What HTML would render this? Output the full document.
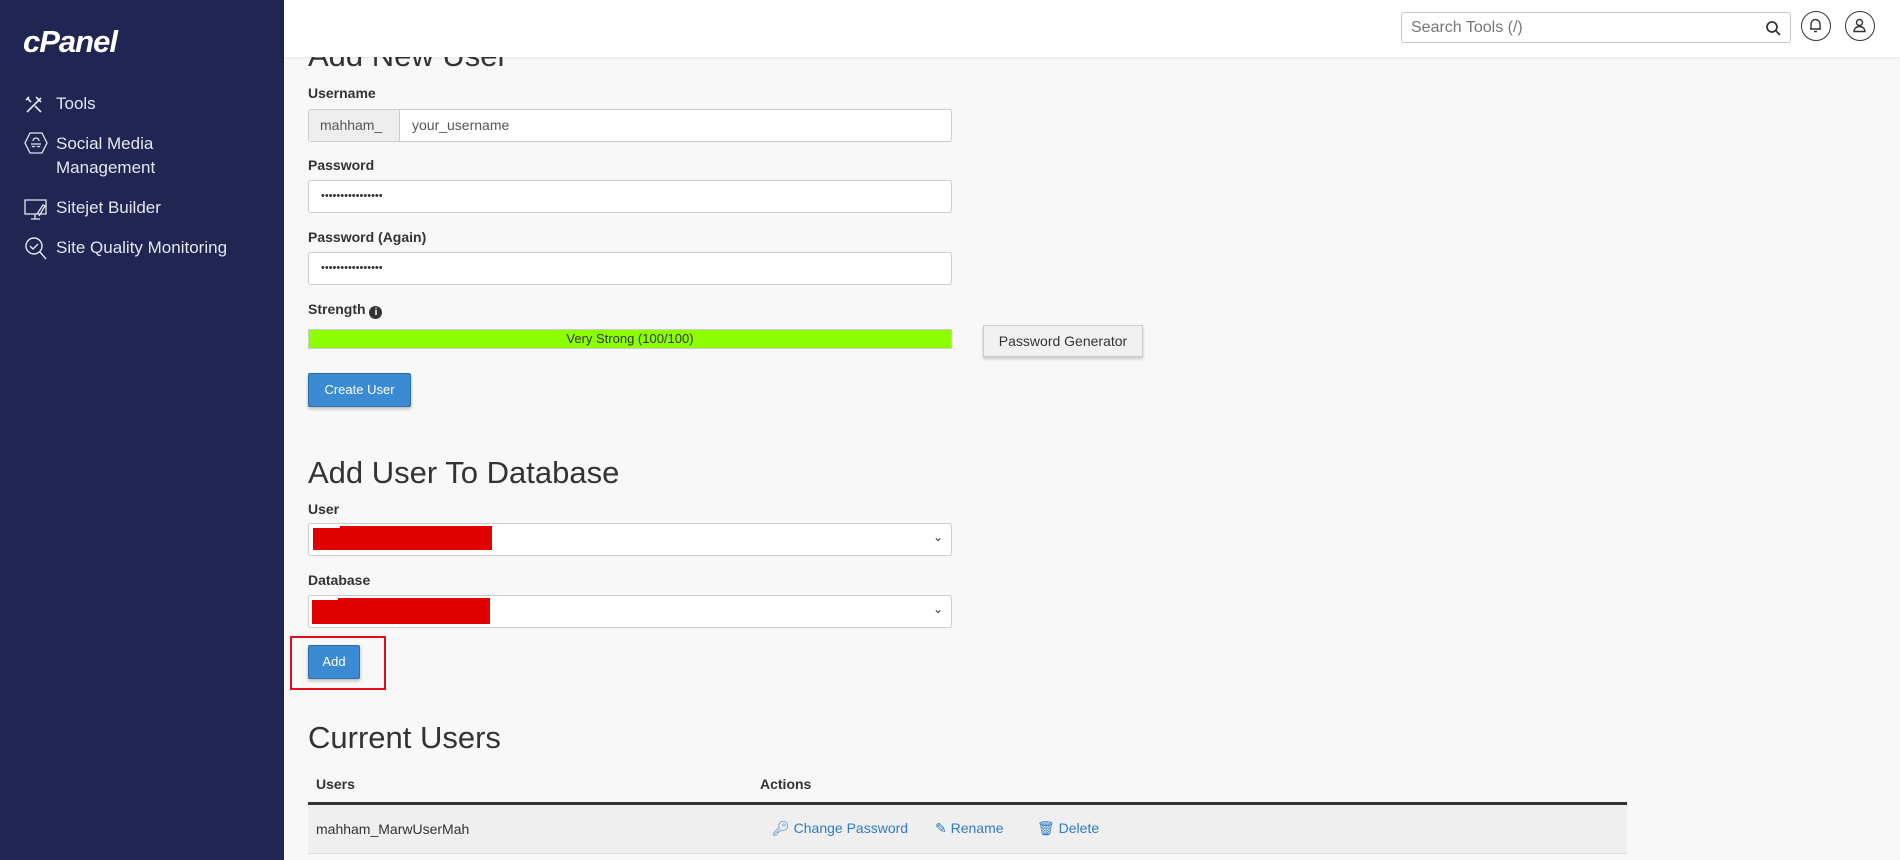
<!DOCTYPE html>
<html><head><meta charset="utf-8"><style>
*{box-sizing:border-box;margin:0;padding:0}
body{width:1900px;height:860px;overflow:hidden;background:#f8f8f8;font-family:"Liberation Sans",sans-serif;color:#333;position:relative}
.side{position:absolute;left:0;top:0;width:284px;height:860px;background:#202552;color:#e4e6f0}
.logo{position:absolute;left:23px;top:24px;font:italic bold 31px "Liberation Sans",sans-serif;color:#fff;letter-spacing:-1px}
.nav{position:absolute;left:56px;font-size:17px;line-height:24px;color:#e4e6f0}
.ico{position:absolute;left:24px}
.hdr{position:absolute;left:284px;top:0;right:0;height:57px;background:#fff;box-shadow:0 1px 3px rgba(0,0,0,.08);z-index:2}
.search{position:absolute;left:1117px;top:12px;width:390px;height:31px;border:1px solid #c8c8c8;border-radius:3px;font-size:16px;color:#777;padding:6px 9px}
.circ{position:absolute;top:11px;width:30px;height:30px;border:1.5px solid #333;border-radius:50%}
.a{position:absolute}
h2{position:absolute;left:308px;font-weight:normal;font-size:31px;color:#333}
label{position:absolute;left:308px;font-weight:bold;font-size:14px;color:#333}
.inp{position:absolute;left:308px;width:644px;height:33px;background:#fff;border:1px solid #ccc;border-radius:3px;font-size:14px;padding:7px 12px}
.btn{position:absolute;background:#3a8ad4;color:#fff;font-size:13px;border:1px solid #2f6ea8;border-radius:2px;box-shadow:0 2px 3px rgba(0,0,0,.25);text-align:center}
.red{position:absolute;background:#e00000}
.lnk{position:absolute;top:820px;color:#2f7bc4;font-size:14px}
</style></head><body>
<div class="side">
<div class="logo">cPanel</div>
<svg class="ico" style="top:94px" width="20" height="20" viewBox="0 0 20 20" fill="none" stroke="#e4e6f0" stroke-width="1.6"><path d="M3 18L17 4M12 3l5 5M3 4l4 4M2 6l3-3M11 12l6 6"/></svg>
<div class="nav" style="top:92px">Tools</div>
<svg class="ico" style="top:132px" width="24" height="22" viewBox="0 0 24 22" fill="none" stroke="#e4e6f0" stroke-width="1.3"><path d="M6 1h12l5 10-5 10H6L1 11z"/><path d="M7 12h10M9 9a3 3 0 016 0M8 14a2 2 0 003 0M13 14a2 2 0 003 0"/></svg>
<div class="nav" style="top:132px">Social Media<br>Management</div>
<svg class="ico" style="top:199px" width="24" height="22" viewBox="0 0 24 22" fill="none" stroke="#e4e6f0" stroke-width="1.3"><path d="M1 1h21v14H1zM7 20h9M11 15v5M13 15l6-9 2 1-6 10"/></svg>
<div class="nav" style="top:196px">Sitejet Builder</div>
<svg class="ico" style="top:236px" width="24" height="26" viewBox="0 0 24 26" fill="none" stroke="#e4e6f0" stroke-width="1.4"><circle cx="10" cy="10" r="8"/><path d="M6 10l3 3 5-5M16 16l6 7"/></svg>
<div class="nav" style="top:236px">Site Quality Monitoring</div>
</div>
<div class="hdr">
<div class="search">Search Tools (/)
<svg style="position:absolute;right:9px;top:7px" width="16" height="16" viewBox="0 0 16 16" fill="none" stroke="#333" stroke-width="1.7"><circle cx="7" cy="7" r="5"/><path d="M11 11l4 4"/></svg></div>
<div class="circ" style="left:1517px"><svg style="position:absolute;left:7px;top:6px" width="13" height="15" viewBox="0 0 13 15" fill="none" stroke="#333" stroke-width="1.4"><path d="M2 11V6a4.5 4.5 0 019 0v5M1 11h11M5 13.5h3"/></svg></div>
<div class="circ" style="left:1561px"><svg style="position:absolute;left:7px;top:6px" width="13" height="15" viewBox="0 0 13 15" fill="none" stroke="#333" stroke-width="1.4"><circle cx="6.5" cy="4.5" r="3"/><path d="M1 13.5a5.5 5 0 0111 0z"/></svg></div>
</div>
<h2 style="top:38px">Add New User</h2>
<label style="top:85px">Username</label>
<div class="inp" style="top:109px;padding:0">
<div class="a" style="left:0;top:0;width:91px;height:31px;background:#eee;border-right:1px solid #ccc;color:#555;padding:7px 11px;font-size:14px">mahham_</div>
<div class="a" style="left:103px;top:7px;color:#555;font-size:14px">your_username</div></div>
<label style="top:157px">Password</label>
<div class="inp" style="top:180px;font-size:11px;padding-top:9px">••••••••••••••••</div>
<label style="top:229px">Password (Again)</label>
<div class="inp" style="top:252px;font-size:11px;padding-top:9px">••••••••••••••••</div>
<label style="top:301px">Strength <span style="display:inline-block;width:13px;height:13px;border-radius:50%;background:#333;color:#fff;font-size:10px;text-align:center;line-height:13px;vertical-align:-1px">i</span></label>
<div class="a" style="left:308px;top:329px;width:644px;height:20px;background:#8cff00;border:1px solid #ccc;text-align:center;font-size:13px;line-height:18px;color:#333">Very Strong (100/100)</div>
<div class="a" style="left:983px;top:325px;width:160px;height:32px;background:#f1f1f1;border:1px solid #ccc;box-shadow:0 2px 3px rgba(0,0,0,.2);font-size:14px;text-align:center;line-height:30px">Password Generator</div>
<div class="btn" style="left:308px;top:373px;width:103px;height:34px;line-height:32px">Create User</div>
<h2 style="top:455px">Add User To Database</h2>
<label style="top:501px">User</label>
<div class="inp" style="top:523px"><span style="position:absolute;right:8px;top:6px;font-size:12px">&#8964;</span></div>
<div class="red" style="left:313px;top:528px;width:55px;height:22px"></div><div class="red" style="left:340px;top:526px;width:152px;height:24px"></div>
<label style="top:572px">Database</label>
<div class="inp" style="top:595px"><span style="position:absolute;right:8px;top:6px;font-size:12px">&#8964;</span></div>
<div class="red" style="left:312px;top:600px;width:90px;height:24px"></div><div class="red" style="left:338px;top:598px;width:152px;height:26px"></div>
<div class="a" style="left:290px;top:636px;width:96px;height:54px;border:2px solid #e0101a"></div>
<div class="btn" style="left:308px;top:645px;width:52px;height:34px;line-height:32px">Add</div>
<h2 style="top:720px">Current Users</h2>
<div class="a" style="left:316px;top:776px;font-weight:bold;font-size:14px">Users</div>
<div class="a" style="left:760px;top:776px;font-weight:bold;font-size:14px">Actions</div>
<div class="a" style="left:308px;top:802px;width:1319px;height:3px;background:#333"></div>
<div class="a" style="left:308px;top:805px;width:1319px;height:49px;background:#efefef;border-bottom:1px solid #ddd"></div>
<div class="a" style="left:316px;top:821px;font-size:14px">mahham_MarwUserMah</div>
<div class="lnk" style="left:772px">&#128273;&#xFE0E; Change Password</div>
<div class="lnk" style="left:935px">&#9998; Rename</div>
<div class="lnk" style="left:1037px">&#128465;&#xFE0E; Delete</div>
</body></html>
